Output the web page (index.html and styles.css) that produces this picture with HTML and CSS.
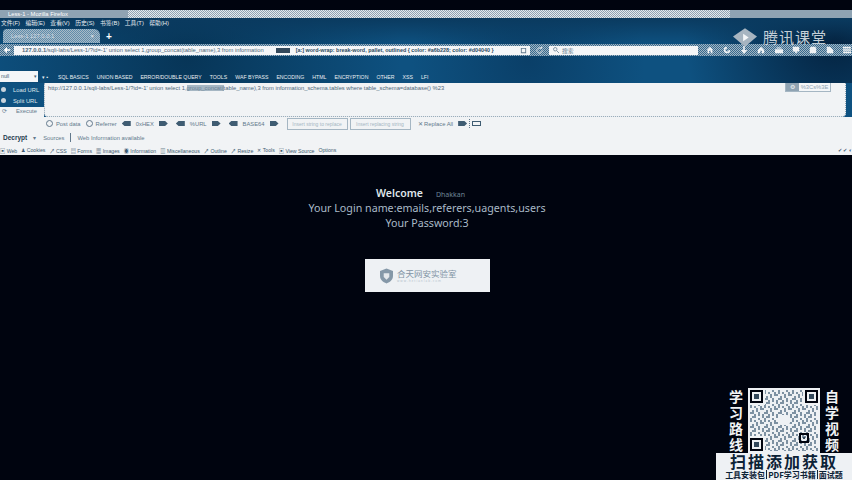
FILE: index.html
```html
<!DOCTYPE html>
<html>
<head>
    <title>Less-1</title>
    <meta charset="UTF-8">
    <link rel="stylesheet" href="styles.css">
</head>
<body>
    <div class="browser">
        <div class="title-bar">
            <span class="title-text">Less-1 - Mozilla Firefox</span>
            <span class="title-end"></span>
        </div>
        <div class="theme">
            <div class="menu-bar">
                <span>文件(F)</span><span>编辑(E)</span><span>查看(V)</span><span>历史(S)</span><span>书签(B)</span><span>工具(T)</span><span>帮助(H)</span>
            </div>
            <div class="tab-bar">
                <div class="tab"><span class="tab-title">Less-1 127.0.0.1</span><span>×</span></div>
                <span class="new-tab">+</span>
            </div>
            <div class="nav-bar">
                <svg class="back" viewBox="0 0 10 10"><path d="M5 1 1 5l4 4V6h4V4H5z"/></svg>
                <div class="url-box">
                    <span class="url-text"><span class="url-host">127.0.0.1</span>/sqli-labs/Less-1/?id=-1' union select 1,group_concat(table_name),3 from information</span>
                    <b class="url-block"></b>
                    <span class="url-hint">[a:] word-wrap: break-word, pallet, outlined { color: #a6b228; color: #d04040 }</span>
                    <svg class="url-end" viewBox="0 0 8 8"><path d="M1 1h6v6H1zM2 2v4h4V2z" fill-rule="evenodd"/></svg>
                </div>
                <svg class="reload" viewBox="0 0 10 10"><path d="M8 5a3 3 0 1 1-1-2.200" fill="none" stroke="#d7e0e6"/><path d="M8 0v3H5z" fill="#d7e0e6"/></svg>
                <div class="search-box">
                    <svg viewBox="0 0 8 8"><circle cx="3" cy="3" r="2.300" fill="none" stroke="#62798c"/><path d="M5 5l3 3" stroke="#62798c"/></svg>
                    <span>搜索</span>
                </div>
                <div class="nav-icons">
                    <svg viewBox="0 0 10 10"><path d="M1 5 5 1l4 4H8v4H6V6H4v3H2V5z"/></svg>
                    <svg viewBox="0 0 10 10"><path d="M5 1a4 4 0 1 0 4 4H7a2 2 0 1 1-2-2z"/></svg>
                    <svg viewBox="0 0 10 10"><path d="M4 0h2v5h3L5 10 1 5h3z"/></svg>
                    <svg viewBox="0 0 10 10"><path d="M1 5 5 1l4 4v4H6V6H4v3H1z"/></svg>
                    <svg viewBox="0 0 10 10"><path d="M0 4h10v5H0zM2 2h6v1H2z"/></svg>
                    <svg viewBox="0 0 10 10"><path d="M1 1h8v6H6v2H4V7H1z"/></svg>
                    <svg viewBox="0 0 10 10"><path d="M2 1h6l1 2v6H1V3z"/></svg>
                    <svg viewBox="0 0 10 10"><path d="M1 1h4l4 4v4H1z"/></svg>
                    <svg viewBox="0 0 10 10"><path d="M0 1h10v2H0zM0 4h10v2H0zM0 7h10v2H0z"/></svg>
                </div>
            </div>
            <div class="theme-gap"></div>
            <div class="hack-menu">
                <div class="hack-select">null<span>▾</span></div>
                <span class="hack-arrows">▾ ▪</span>
                <span>SQL BASICS</span><span>UNION BASED</span><span>ERROR/DOUBLE QUERY</span><span>TOOLS</span><span>WAF BYPASS</span><span>ENCODING</span><span>HTML</span><span>ENCRYPTION</span><span>OTHER</span><span>XSS</span><span>LFI</span>
            </div>
        </div>
        <div class="hack-main">
            <div class="hack-side">
                <div class="side-blue">
                    <div class="side-item"><i></i>Load URL</div>
                    <div class="side-item"><i></i>Split URL</div>
                </div>
                <div class="side-run"><span>⟳</span>Execute</div>
            </div>
            <div class="hack-input">
                <span class="query">http://127.0.0.1/sqli-labs/Less-1/?id=-1' union select 1,<mark>group_concat(</mark>table_name),3 from information_schema.tables where table_schema=database() %23</span>
                <div class="hack-tag"><span class="tag-icon">⚙</span><span class="tag-text">%3Cs%3E</span></div>
            </div>
        </div>
        <div class="hack-options">
            <label><i></i>Post data</label>
            <label><i></i>Referrer</label>
            <span class="opt"><b class="arrow-l"></b>0xHEX<b class="arrow-r"></b></span>
            <span class="opt"><b class="arrow-l"></b>%URL<b class="arrow-r"></b></span>
            <span class="opt"><b class="arrow-l"></b>BASE64<b class="arrow-r"></b></span>
            <span class="opt-box">Insert string to replace</span>
            <span class="opt-box">Insert replacing string</span>
            <span class="opt-x">✕ Replace All</span>
            <b class="arrow-r"></b>
            <span class="opt-sep"></span>
            <span class="opt-end"></span>
        </div>
        <div class="dev-row">
            <strong>Decrypt</strong><span class="dev-arrow">▾</span>
            <span>Sources</span>
            <span class="dev-sep"></span>
            <span>Web Information available</span>
        </div>
        <div class="tool-row">
            <span>▣ Web</span><span>♟ Cookies</span><span>↗ CSS</span><span>▤ Forms</span><span>▦ Images</span><span>◉ Information</span><span>▥ Miscellaneous</span><span>↗ Outline</span><span>↗ Resize</span><span>✕ Tools</span><span>▣ View Source</span><span>Options</span>
            <span class="tool-end">✔ ✔ ◐</span>
        </div>
    </div>

    <div class="page">
        <p class="welcome"><b>Welcome</b><span class="dhakkan">Dhakkan</span></p>
        <p>Your Login name:emails,referers,uagents,users</p>
        <p>Your Password:3</p>
        <div class="lab-card">
            <svg class="shield" viewBox="0 0 14 16"><path d="M7 0 14 2.500V8c0 4-3 6.500-7 8-4-1.500-7-4-7-8V2.500z" fill="#8598a8"/><path d="M4 5h6v4l-3 3-3-3z" fill="#e4e8ec"/></svg>
            <div>
                <div class="lab-name">合天网安实验室</div>
                <div class="lab-sub">www.hetianlab.com</div>
            </div>
        </div>
    </div>

    <div class="tencent">
        <svg viewBox="0 0 26 20"><path d="M13 0 26 9 13 20 0 9z" fill="#a7b5c1"/><path d="M11 6l6 4-6 4z" fill="#f4f6f8"/></svg>
        <span>腾讯课堂</span>
    </div>

    <div class="promo">
        <div class="promo-top">
            <div class="promo-col">学习路线</div>
            <svg class="qr" viewBox="0 0 72 65">
                <defs>
                    <pattern id="mods" width="14" height="14" patternUnits="userSpaceOnUse">
                        <path d="M0 0h2v2H0zM4 0h4v2H4zM10 2h2v2h-2zM2 2h2v4H2zM6 4h2v2H6zM12 4h2v4h-2zM0 6h2v2H0zM8 6h2v4H8zM4 8h2v2H4zM2 10h4v2H2zM10 10h2v4h-2zM6 12h2v2H6zM0 12h2v2H0z" fill="#7d91a2"/>
                    </pattern>
                </defs>
                <rect width="72" height="65" fill="#eef1f4"/>
                <rect x="2" y="2" width="68" height="61" fill="url(#mods)"/>
                <g fill="#eef1f4">
                    <rect width="17" height="17"/><rect x="55" width="17" height="17"/><rect y="48" width="17" height="17"/>
                </g>
                <g fill="none" stroke="#00040f" stroke-width="2">
                    <rect x="3" y="3" width="11" height="11"/><rect x="58" y="3" width="11" height="11"/><rect x="3" y="51" width="11" height="11"/><rect x="52" y="46" width="8" height="8"/>
                </g>
                <g fill="#33495c">
                    <rect x="6" y="6" width="5" height="5"/><rect x="61" y="6" width="5" height="5"/><rect x="6" y="54" width="5" height="5"/><rect x="55" y="49" width="2" height="2"/>
                </g>
                <rect x="30" y="27" width="12" height="10" rx="3" fill="#eef1f4"/>
            </svg>
            <div class="promo-col">自学视频</div>
        </div>
        <div class="promo-banner">
            <div class="promo-big">扫描添加获取</div>
            <div class="promo-small"><span>工具安装包</span><span>PDF学习书籍</span><span>面试题</span></div>
        </div>
    </div>
</body>
</html>
```

FILE: styles.css
```css
* {
    box-sizing: border-box;
}
html, body {
    margin: 0;
    height: 480px;
    overflow: hidden;
}
body {
    position: relative;
    background-color: #00040f;
    padding-top: 10px;
    font-family: "Liberation Sans", "Noto Sans CJK SC", sans-serif;
}
.browser {
    height: 145px;
    display: flex;
    flex-direction: column;
    background-color: #f1f3f5;
    color: #62798c;
    font-size: 5.800px;
}

/* title bar */
.title-bar {
    height: 8px;
    display: flex;
    justify-content: space-between;
    background-image: repeating-conic-gradient(#e4e9ed 0 25%, #8fa3b3 0 50%);
    background-size: 2px 2px;
    color: #fff;
    line-height: 8px;
}
.title-text {
    width: 128px;
    padding-left: 8px;
    background-color: #8fa3b3;
    white-space: nowrap;
}
.title-end {
    width: 122px;
    background-color: #8fa3b3;
}

/* blue themed area */
.theme {
    height: 65px;
    display: flex;
    flex-direction: column;
    background-color: #0e5180;
    background-image: linear-gradient(#0a3a5f, transparent 26px), radial-gradient(circle at 22% 60%, #073557 0, transparent 32%), radial-gradient(circle at 98% 30%, #04223f 0, transparent 18%), radial-gradient(circle at 62% 65%, #0a3f68 0, transparent 22%);
    color: #e8edf1;
}
.menu-bar {
    height: 10px;
    display: flex;
    gap: 5.500px;
    padding-left: 1px;
    line-height: 10px;
    white-space: nowrap;
}
.tab-bar {
    height: 16px;
    display: flex;
    align-items: center;
    gap: 6px;
    padding-left: 3px;
}
.tab {
    width: 97px;
    height: 14px;
    display: flex;
    justify-content: space-between;
    align-items: center;
    padding: 0 6px 0 8px;
    border-radius: 4px 6px 0 0;
    background-image: repeating-conic-gradient(#a8bac7 0 25%, #5f8cab 0 50%);
    background-size: 2px 2px;
}
.tab-title {
    color: #cfd9e0;
}
.new-tab {
    font-size: 10px;
    font-weight: bold;
    color: #fff;
}
.nav-bar {
    height: 12px;
    display: flex;
    align-items: center;
    background-image: repeating-conic-gradient(#a3b5c2 0 25%, #35698f 0 50%);
    background-size: 2px 2px;
}
.back {
    width: 14px;
    height: 8px;
    fill: #fff;
}
.url-box {
    width: 516px;
    height: 9px;
    display: flex;
    align-items: center;
    padding: 0 3px 0 8px;
    background-color: #f4f6f8;
    color: #4d6679;
    white-space: nowrap;
}
.url-host {
    font-weight: bold;
}
.url-block {
    width: 14px;
    height: 5px;
    margin-left: 12px;
    background-color: #33495c;
}
.url-hint {
    margin-left: 6px;
    color: #2d4a60;
    font-weight: bold;
    font-size: 5.400px;
}
.url-end {
    width: 7px;
    height: 7px;
    margin-left: auto;
    fill: #62798c;
}
.reload {
    width: 19px;
    height: 9px;
}
.search-box {
    width: 149px;
    height: 9px;
    display: flex;
    align-items: center;
    gap: 3px;
    padding-left: 4px;
    background-color: #f4f6f8;
    color: #62798c;
}
.search-box svg {
    width: 6px;
    height: 6px;
}
.nav-icons {
    flex: 1;
    display: flex;
    justify-content: space-between;
    padding: 0 1px 0 8px;
}
.nav-icons svg {
    width: 8px;
    height: 8px;
    fill: #eef1f4;
}
.theme-gap {
    height: 14px;
}
.hack-menu {
    height: 13px;
    display: flex;
    align-items: center;
    gap: 8px;
    white-space: nowrap;
    font-size: 5.200px;
}
.hack-select {
    width: 38px;
    height: 11px;
    display: flex;
    justify-content: space-between;
    padding: 0 1px;
    background-color: #f4f6f8;
    color: #45606f;
    line-height: 11px;
}
.hack-arrows {
    width: 10px;
    margin-left: -4px;
    margin-right: -2px;
}

/* hackbar */
.hack-main {
    height: 34px;
    display: flex;
    background-color: #0e5180;
}
.hack-side {
    width: 44px;
    display: flex;
    flex-direction: column;
    background-color: #f1f3f5;
}
.side-blue {
    height: 24px;
    padding-top: 1px;
    background-color: #0e5180;
    color: #dfe6eb;
}
.side-item {
    display: flex;
    align-items: center;
    gap: 7px;
    height: 11px;
    padding-left: 1px;
    white-space: nowrap;
}
.side-item i {
    width: 5px;
    height: 5px;
    border-radius: 50%;
    background-color: #c9d4dc;
}
.side-run {
    display: flex;
    gap: 9px;
    padding: 1px 0 0 2px;
    white-space: nowrap;
}
.hack-input {
    position: relative;
    width: 802px;
    padding: 2px 3px;
    background-color: #f1f3f5;
    border: 1px dotted #8fa3b3;
    border-top: 0;
    border-radius: 0 0 4px 4px;
    color: #4d6679;
    white-space: nowrap;
}
.query mark {
    background-color: #a5b6c3;
    color: #6d8496;
}
.hack-tag {
    position: absolute;
    top: 0;
    right: 14px;
    width: 46px;
    height: 9px;
    display: flex;
    background-color: #f4f6f8;
    border: 1px solid #a5b6c3;
    border-top: 0;
}
.tag-icon {
    width: 13px;
    background-color: #8fa3b3;
    color: #f1f3f5;
    line-height: 8px;
    text-align: center;
}
.tag-text {
    flex: 1;
    text-align: center;
    line-height: 8px;
    color: #8fa3b3;
}
.hack-options {
    height: 13px;
    display: flex;
    align-items: center;
    gap: 5px;
    padding-left: 46px;
    white-space: nowrap;
}
.hack-options label {
    display: flex;
    align-items: center;
    gap: 3px;
}
.hack-options i {
    width: 7px;
    height: 7px;
    border: 1px solid #62798c;
    border-radius: 50%;
}
.opt {
    display: flex;
    align-items: center;
    gap: 5px;
    margin-right: 3px;
}
.arrow-l, .arrow-r {
    width: 9px;
    height: 5px;
    background-color: #3f5c72;
}
.arrow-l {
    clip-path: polygon(30% 0, 100% 0, 100% 100%, 30% 100%, 0 50%);
}
.arrow-r {
    clip-path: polygon(0 0, 70% 0, 100% 50%, 70% 100%, 0 100%);
}
.opt-box {
    width: 61px;
    height: 12px;
    margin-right: -3px;
    border: 1px solid #a5b6c3;
    font-size: 5px;
    line-height: 10px;
    text-align: center;
    color: #a5b6c3;
    overflow: hidden;
}
.opt-x {
    margin-left: 5px;
}
.opt-sep {
    width: 1px;
    height: 9px;
    margin: 0 -3px;
    border-left: 1px dotted #62798c;
}
.opt-end {
    width: 9px;
    height: 5px;
    border: 1px solid #3f5c72;
}
.dev-row {
    height: 15px;
    display: flex;
    align-items: center;
    gap: 6px;
    padding-left: 3px;
    white-space: nowrap;
}
.dev-row strong {
    color: #1f3a4e;
    font-size: 6.500px;
}
.dev-arrow {
    margin-right: 1px;
}
.dev-sep {
    width: 1px;
    height: 9px;
    background-color: #62798c;
}
.tool-row {
    height: 10px;
    display: flex;
    align-items: center;
    gap: 4px;
    color: #3f5c72;
    font-size: 5.200px;
    white-space: nowrap;
}
.tool-end {
    margin-left: auto;
}

/* page */
.page {
    padding-top: 31px;
    color: #a9bac7;
    font-family: "Noto Sans", "Noto Sans CJK SC", sans-serif;
    font-size: 10.700px;
    line-height: 15px;
    text-align: center;
}
.page p {
    margin: 0;
    height: 15px;
    position: relative;
    left: 1px;
}
.welcome b {
    color: #dfe6eb;
    font-size: 10.500px;
    font-weight: 600;
}
.dhakkan {
    display: inline-block;
    width: 42px;
    margin-left: 13px;
    color: #6d8496;
    font-size: 7px;
    vertical-align: middle;
    text-align: left;
}
.lab-card {
    width: 125px;
    height: 33px;
    margin: 28px auto 0;
    display: flex;
    align-items: center;
    gap: 4px;
    padding-left: 15px;
    background-color: #eef1f4;
    text-align: left;
    position: relative;
    left: 1.500px;
}
.shield {
    width: 13px;
    height: 16px;
}
.lab-name {
    color: #7f93a4;
    font-size: 8.500px;
    line-height: 11px;
}
.lab-sub {
    color: #b4c1cb;
    font-size: 3px;
    line-height: 4px;
    letter-spacing: 1px;
}

/* overlays */
.tencent {
    position: absolute;
    top: 27px;
    left: 733px;
    display: flex;
    align-items: center;
    gap: 6px;
    color: #c3ced7;
    font-family: "Noto Sans CJK SC", sans-serif;
    font-size: 15px;
    letter-spacing: 1px;
    line-height: 20px;
}
.tencent svg {
    width: 24px;
    height: 19px;
}
.promo {
    position: absolute;
    left: 716px;
    top: 388px;
    width: 136px;
    height: 92px;
    display: flex;
    flex-direction: column;
    font-family: "Noto Sans CJK SC", sans-serif;
    font-weight: 700;
}
.promo-top {
    height: 65px;
    display: flex;
    justify-content: center;
    gap: 4px;
}
.promo-col {
    width: 16px;
    color: #f1f3f5;
    font-size: 14px;
    line-height: 16px;
    text-align: center;
}
.qr {
    width: 72px;
    height: 65px;
}
.promo-banner {
    flex: 1;
    background-color: #eef1f4;
    color: #0c2236;
    text-align: center;
}
.promo-big {
    height: 17px;
    font-size: 16px;
    line-height: 17px;
    letter-spacing: 2px;
}
.promo-small {
    display: flex;
    justify-content: center;
    font-size: 8px;
    line-height: 9px;
    white-space: nowrap;
}
.promo-small span + span {
    margin-left: 1px;
    padding-left: 1px;
    border-left: 1px solid #0c2236;
}
```
